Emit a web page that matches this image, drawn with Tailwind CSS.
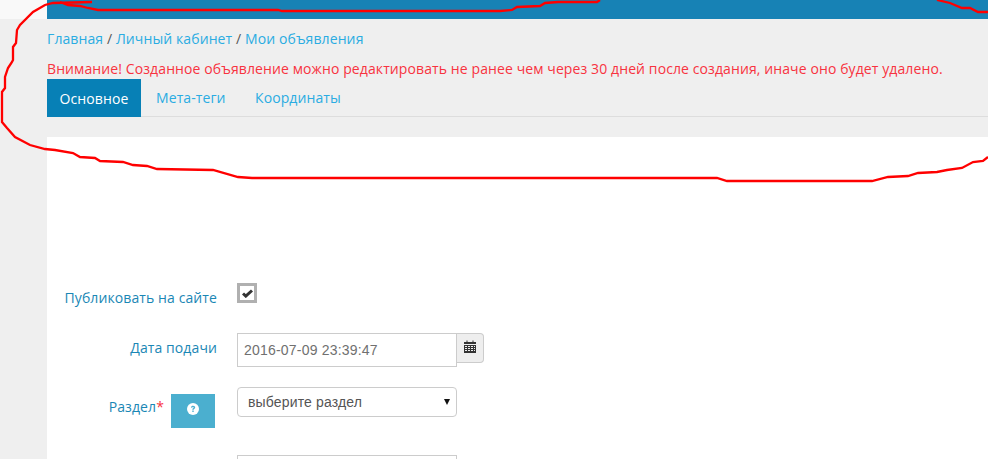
<!DOCTYPE html>
<html lang="ru">
  <head>
    <meta charset="UTF-8" />
    <title>Мои объявления</title>
    <script src="https://cdn.jsdelivr.net/npm/@tailwindcss/browser@4"></script>
  </head>
  <body class="relative h-[459px] overflow-hidden bg-[#efefef] font-['Open_Sans',sans-serif] text-[14px] tracking-[0.1px]">
    <div class="flex h-[19px]">
      <div class="w-[47px] bg-[#f9f9f9]"></div>
      <div class="flex-1 bg-[#1782b5]"></div>
    </div>

    <div class="pl-[47px]">
      <div class="h-[118px]">
        <div class="pt-[10px] leading-[20px] text-[#555]">
          <a href="#" class="text-[#2aace2]">Главная</a> / <a href="#" class="text-[#2aace2]">Личный кабинет</a> / <a href="#" class="text-[#2aace2]">Мои объявления</a>
        </div>
        <p class="mt-[10px] leading-[20px] whitespace-nowrap text-[#f8333f]">Внимание! Созданное объявление можно редактировать не ранее чем через 30 дней после создания, иначе оно будет удалено.</p>
        <div class="flex h-[38px] border-b border-[#ddd]">
          <a href="#" class="flex h-[38px] w-[94px] items-center justify-center bg-[#0780b6] text-white">Основное</a>
          <a href="#" class="flex w-[114px] items-center pl-[15px] text-[#2aace2]">Мета-теги</a>
          <a href="#" class="flex items-center text-[#2aace2]">Координаты</a>
        </div>
      </div>

      <div class="h-[322px] overflow-hidden bg-white pt-[146px]">
        <div class="flex h-[50px]">
          <label class="w-[170px] pt-[5px] text-right leading-[20px] whitespace-nowrap text-[#1a87b5]">Публиковать на сайте</label>
          <div class="ml-[20px] flex h-[20px] w-[20px] items-center justify-center border-[3px] border-[#b0b0b0] bg-white">
            <svg width="11" height="9" viewBox="0 0 11 9"><path d="M1 4.500l2.800 2.600L10 1.500" fill="none" stroke="#333" stroke-width="3" /></svg>
          </div>
        </div>

        <div class="flex h-[54px]">
          <label class="w-[170px] pt-[5px] text-right leading-[20px] text-[#1a87b5]">Дата подачи</label>
          <div class="ml-[20px] flex items-start">
            <div class="flex h-[34px] w-[220px] items-center border border-[#ccc] bg-white pl-[6px] font-['Liberation_Sans',sans-serif] tracking-[0.2px] text-[#707070]">2016-07-09 23:39:47</div>
            <div class="flex h-[30px] w-[27px] justify-center rounded-r-[4px] border border-l-0 border-[#ccc] bg-[#eee] pt-[6px]">
              <svg width="12" height="13" viewBox="0 0 12 13">
                <path d="M0 2h2.500V0.500h1V2h5V0.500h1V2H12v2H0z" fill="#333" />
                <path d="M0 5h12v8H0z" fill="#333" />
                <path d="M1 6h2v1H1zM4 6h2v1H4zM7 6h2v1H7zM10 6h1v1h-1zM1 8h2v1H1zM4 8h2v1H4zM7 8h2v1H7zM10 8h1v1h-1zM1 10h2v1H1zM4 10h2v1H4zM7 10h2v1H7zM10 10h1v1h-1z" fill="#eee" />
              </svg>
            </div>
          </div>
        </div>

        <div class="flex h-[68px]">
          <div class="flex w-[168px] items-start justify-end">
            <label class="pt-[5px] leading-[30px] text-[#1a87b5]">Раздел<span class="text-[#f8333f]">*</span></label>
            <div class="mt-[7px] ml-[7px] flex h-[34px] w-[44px] justify-center bg-[#4bafcf] pt-[9px]">
              <svg width="12" height="12" viewBox="0 0 12 12">
                <circle cx="6" cy="6" r="6" fill="#fff" />
                <path d="M3.900 4.600C4 3.300 5 2.800 6.100 2.800c1.200 0 2.100.7 2.100 1.700 0 1.300-1.500 1.400-1.500 2.300H5.300c0-1.500 1.400-1.500 1.400-2.200 0-.4-.3-.6-.7-.6-.5 0-.8.300-.9.700z" fill="#4bafcf" />
                <path d="M5.300 7.600h1.400v1.400H5.300z" fill="#4bafcf" />
              </svg>
            </div>
          </div>
          <div class="ml-[22px] flex h-[30px] w-[220px] items-center justify-between rounded-[4px] border border-[#ccc] bg-white pr-[6px] pl-[10px] font-['Liberation_Sans',sans-serif] tracking-[0.15px] text-[#555]">
            <span>выберите раздел</span>
            <span class="h-0 w-0 border-x-[3px] border-t-[6px] border-x-transparent border-t-[#111]"></span>
          </div>
        </div>

        <div class="ml-[190px] h-[34px] w-[220px] border border-[#ccc] bg-white"></div>
      </div>
    </div>

    <!-- hand drawn marker line on top of the screenshot -->
    <svg class="absolute top-0 left-0" width="988" height="459" fill="none" stroke="#f00" stroke-width="2.300">
      <path d="M92 2L53 3L45 5L33 12L20 25L17 30L16 43L13 47L13 60L12 62L8 68L5 77L5 88L2 92L2 122L7 128L15 137L30 145L45 149L55 150L73 153L80 157L95 158L100 161L123 162L133 165L147 166L157 169L213 170L238 177L252 178L717 178L727 181L872 181L888 177L908 176L918 173L937 172L947 170L962 168L973 162L983 161L988 157" />
      <path d="M60 2L68 5L80 6L88 8L98 10L278 10L282 11L500 11L512 10L517 7L540 6L545 3L558 2L597 2L600 0" />
      <path d="M937 0L950 3L962 8L970 8L978 12L988 12" />
    </svg>
  </body>
</html>
